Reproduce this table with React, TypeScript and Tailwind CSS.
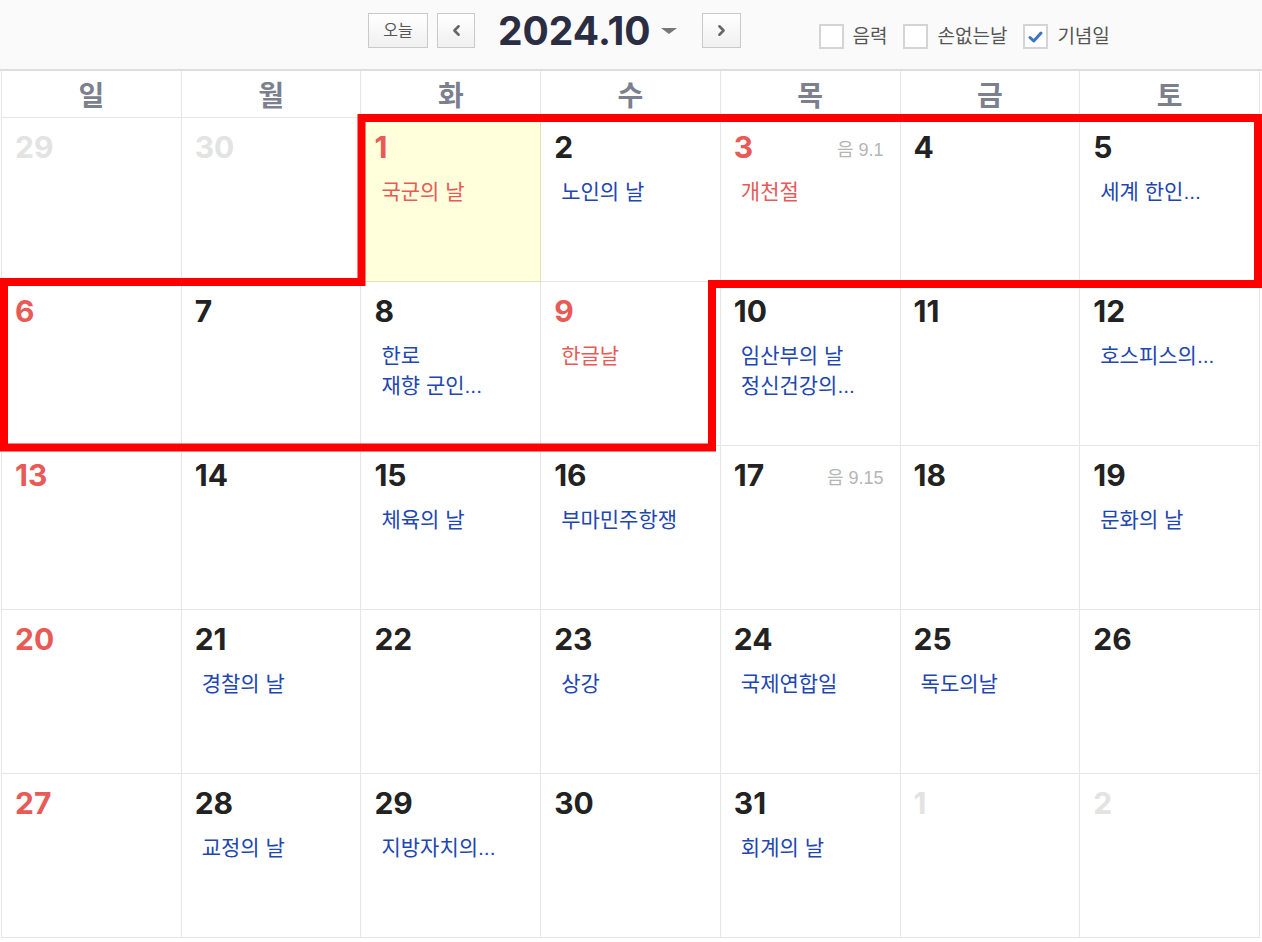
import React from 'react';
import { ChevronLeft, ChevronRight } from 'lucide-react';

type Ev = { t: string; red?: boolean };
type Day = { d: number; muted?: boolean; red?: boolean; lunar?: string; today?: boolean; ev?: Ev[] };

const dayNames = ['일', '월', '화', '수', '목', '금', '토'];

const weeks: Day[][] = [
  [
    { d: 29, muted: true },
    { d: 30, muted: true },
    { d: 1, red: true, today: true, ev: [{ t: '국군의 날', red: true }] },
    { d: 2, ev: [{ t: '노인의 날' }] },
    { d: 3, red: true, lunar: '음 9.1', ev: [{ t: '개천절', red: true }] },
    { d: 4 },
    { d: 5, ev: [{ t: '세계 한인...' }] },
  ],
  [
    { d: 6, red: true },
    { d: 7 },
    { d: 8, ev: [{ t: '한로' }, { t: '재향 군인...' }] },
    { d: 9, red: true, ev: [{ t: '한글날', red: true }] },
    { d: 10, ev: [{ t: '임산부의 날' }, { t: '정신건강의...' }] },
    { d: 11 },
    { d: 12, ev: [{ t: '호스피스의...' }] },
  ],
  [
    { d: 13, red: true },
    { d: 14 },
    { d: 15, ev: [{ t: '체육의 날' }] },
    { d: 16, ev: [{ t: '부마민주항쟁' }] },
    { d: 17, lunar: '음 9.15' },
    { d: 18 },
    { d: 19, ev: [{ t: '문화의 날' }] },
  ],
  [
    { d: 20, red: true },
    { d: 21, ev: [{ t: '경찰의 날' }] },
    { d: 22 },
    { d: 23, ev: [{ t: '상강' }] },
    { d: 24, ev: [{ t: '국제연합일' }] },
    { d: 25, ev: [{ t: '독도의날' }] },
    { d: 26 },
  ],
  [
    { d: 27, red: true },
    { d: 28, ev: [{ t: '교정의 날' }] },
    { d: 29, ev: [{ t: '지방자치의...' }] },
    { d: 30 },
    { d: 31, ev: [{ t: '회계의 날' }] },
    { d: 1, muted: true },
    { d: 2, muted: true },
  ],
];

const Checkbox = ({ label, checked }: { label: string; checked?: boolean }) => (
  <label className="flex items-center">
    <span className="w-[25px] h-[25px] border-2 border-[#d4d4d4] bg-white flex items-center justify-center">
      {checked && (
        <svg width="15" height="12" viewBox="0 0 15 12">
          <path d="M2 6.5 L5.8 10 L13 2" fill="none" stroke="#3f73c2" strokeWidth="3" strokeLinecap="round" strokeLinejoin="round" />
        </svg>
      )}
    </span>
    <span className="ml-[9px] text-[19px] leading-[24px] text-[#555]">{label}</span>
  </label>
);

const Cell = ({ day }: { day: Day }) => {
  const numColor = day.muted ? 'text-[#e3e3e3]' : day.red ? 'text-[#e85a56]' : 'text-[#222]';
  return (
    <div className={`h-[163px] pt-[11px] ${day.today ? 'bg-[#ffffdc] ring-1 ring-[#e2e1bd]' : 'bg-white'}`}>
      <div className="flex justify-between items-start pl-[13px] pr-[16px]">
        <span className={`font-['Inter',sans-serif] text-[30px] leading-[36px] font-bold ${numColor}`}>{day.d}</span>
        {day.lunar && <span className="mt-[9px] text-[18px] leading-[24px] text-[#b5b5b5]">{day.lunar}</span>}
      </div>
      {day.ev && (
        <div className="mt-[12px] pl-[20px] text-[21px] leading-[30px]">
          {day.ev.map((e, i) => (
            <div key={i} className={e.red ? 'text-[#e85a56]' : 'text-[#2146b2]'}>
              {e.t}
            </div>
          ))}
        </div>
      )}
    </div>
  );
};

export default function App() {
  return (
    <div className="relative w-[1262px] h-[942px] bg-white font-['Liberation_Sans','Noto_Sans_CJK_KR',sans-serif]">
      {/* toolbar */}
      <div className="h-[71px] bg-[#fafafa] border-b-2 border-[#dedede] flex items-start pl-[368px]">
        <button className="mt-[13px] w-[60px] h-[35px] border border-[#c9c9c9] bg-linear-to-b from-white to-[#f0f0f0] text-[16px] text-[#555]">
          오늘
        </button>
        <button className="mt-[13px] ml-[9px] w-[38px] h-[35px] border border-[#c9c9c9] bg-linear-to-b from-white to-[#f0f0f0] flex items-center justify-center text-[#666]">
          <ChevronLeft size={17} strokeWidth={3.5} />
        </button>
        <div className="mt-[11px] ml-[23px] font-['Inter',sans-serif] text-[39px] leading-[40px] font-bold text-[#2b2e42]">
          2024.10
        </div>
        <span className="mt-[28px] ml-[10px] w-0 h-0 border-l-8 border-r-8 border-t-[6px] border-l-transparent border-r-transparent border-t-[#777]" />
        <button className="mt-[13px] ml-[25px] w-[39px] h-[35px] border border-[#c9c9c9] bg-linear-to-b from-white to-[#f0f0f0] flex items-center justify-center text-[#666]">
          <ChevronRight size={17} strokeWidth={3.5} />
        </button>
        <div className="mt-[24px] ml-[78px] flex items-center gap-[16px]">
          <Checkbox label="음력" />
          <Checkbox label="손없는날" />
          <Checkbox label="기념일" checked />
        </div>
      </div>

      {/* calendar grid */}
      <div className="ml-px w-[1259px] bg-[#e6e6e6] grid grid-cols-7 gap-px px-px pb-px">
        {dayNames.map((n) => (
          <div key={n} className="h-[46px] bg-white flex items-center justify-center font-['Noto_Sans_CJK_KR',sans-serif] text-[28px] font-bold text-[#7c7f8e]">
            {n}
          </div>
        ))}
        {weeks.flat().map((day, i) => (
          <Cell key={i} day={day} />
        ))}
      </div>

      {/* highlight outline */}
      <svg className="absolute inset-0 pointer-events-none" width="1262" height="942">
        <polygon
          points="361.5,118 1258,118 1258,284 712,284 712,447.5 4,447.5 4,282 361.5,282"
          fill="none"
          stroke="#ff0000"
          strokeWidth="8"
          strokeLinejoin="miter"
        />
      </svg>
    </div>
  );
}
